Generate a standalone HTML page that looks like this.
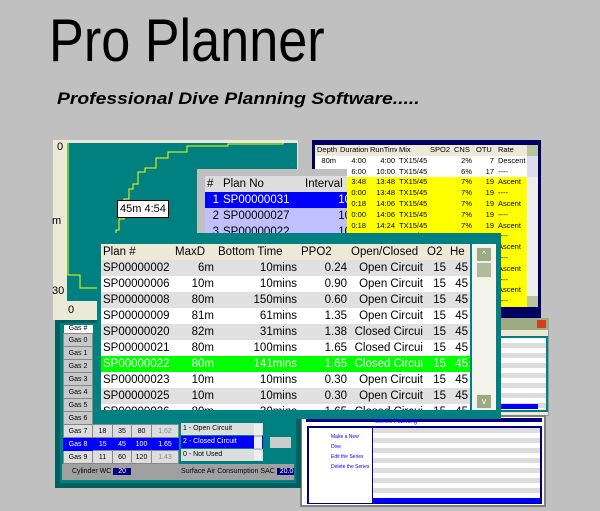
<!DOCTYPE html>
<html><head><meta charset="utf-8"><style>
*{margin:0;padding:0;box-sizing:border-box}
body{width:600px;height:511px;background:#c0c0c0;position:relative;overflow:hidden;font-family:"Liberation Sans",sans-serif}
.a{position:absolute}
table{border-collapse:collapse;table-layout:fixed}
td{white-space:nowrap;overflow:hidden;padding:0 2px}
.r{text-align:right}
.g td{height:13px;line-height:11px}
</style></head><body>
<div class="a" style="left:49px;top:6px;font-size:60px;color:#000;line-height:70px;transform:scaleX(0.87);transform-origin:left;white-space:nowrap">Pro Planner</div>
<div class="a" style="left:57px;top:90px;font-size:16.5px;font-weight:bold;font-style:italic;color:#000;transform:scaleX(1.17);transform-origin:left;white-space:nowrap">Professional Dive Planning Software.....</div>

<!-- chart -->
<div class="a" style="left:53px;top:140px;width:245px;height:180px;background:#ece9d8"></div>
<div class="a" style="left:67px;top:143px;width:230px;height:158px;background:#008080"></div>
<div class="a" style="left:57px;top:141px;font-size:11px">0</div>
<div class="a" style="left:52px;top:285px;font-size:11px">30</div>
<div class="a" style="left:52px;top:215px;font-size:11px">m</div>
<div class="a" style="left:68px;top:304px;font-size:11px">0</div>
<svg class="a" style="left:0;top:0" width="600" height="511"><polyline fill="none" stroke="#ff0" stroke-width="1" points="68,143 68,275 80,275 80,288 112,288 112,290 113,290 113,235 116,235 116,230 119,230 119,219 124,219 124,199 129,199 129,189 133,189 133,184 138,184 138,172 145,172 145,168 156,168 156,158 168,158 168,152 187,152 187,146 228,146 228,144 283,144 283,143"/></svg>
<div class="a" style="left:117px;top:200px;width:52px;height:18px;background:#fff;border:1px solid #000;font-size:11px;line-height:16px;padding-left:2px;white-space:nowrap">45m 4:54</div>

<!-- depth table -->
<div class="a" style="left:312px;top:140px;width:229px;height:180px;background:#000060;padding:5px 3px 3px 3px;overflow:hidden">
<table style="width:223px;font-size:7.5px;line-height:10.8px;background:#ff0">
<col style="width:23px"><col style="width:30px"><col style="width:29px"><col style="width:31px"><col style="width:24px"><col style="width:22px"><col style="width:22px"><col style="width:31px"><col style="width:11px">
<tr style="background:#ece9d8"><td>Depth</td><td>Duration</td><td>RunTime</td><td>Mix</td><td>SPO2</td><td>CNS</td><td>OTU</td><td>Rate</td><td style="background:#b8c4a0"></td></tr>
<tr style="background:#fff"><td class="r">80m</td><td class="r">4:00</td><td class="r">4:00</td><td>TX15/45</td><td></td><td class="r">2%</td><td class="r">7</td><td>Descent</td><td style="background:#dde"></td></tr>
<tr style="background:#fff"><td class="r">80</td><td class="r">6:00</td><td class="r">10:00</td><td>TX15/45</td><td></td><td class="r">6%</td><td class="r">17</td><td>----</td><td style="background:#dde"></td></tr>
<tr><td class="r">48</td><td class="r">3:48</td><td class="r">13:48</td><td>TX15/45</td><td></td><td class="r">7%</td><td class="r">19</td><td>Ascent</td><td style="background:#eee"></td></tr>
<tr><td class="r">48</td><td class="r">0:00</td><td class="r">13:48</td><td>TX15/45</td><td></td><td class="r">7%</td><td class="r">19</td><td>----</td><td style="background:#eee"></td></tr>
<tr><td class="r">18</td><td class="r">0:18</td><td class="r">14:06</td><td>TX15/45</td><td></td><td class="r">7%</td><td class="r">19</td><td>Ascent</td><td style="background:#eee"></td></tr>
<tr><td class="r">18</td><td class="r">0:00</td><td class="r">14:06</td><td>TX15/45</td><td></td><td class="r">7%</td><td class="r">19</td><td>----</td><td style="background:#eee"></td></tr>
<tr><td class="r">8</td><td class="r">0:18</td><td class="r">14:24</td><td>TX15/45</td><td></td><td class="r">7%</td><td class="r">19</td><td>Ascent</td><td style="background:#eee"></td></tr>
<tr><td class="r">8</td><td class="r">0:00</td><td class="r">14:24</td><td>TX15/45</td><td></td><td class="r">7%</td><td class="r">19</td><td>----</td><td style="background:#eee"></td></tr>
<tr><td></td><td></td><td></td><td></td><td></td><td></td><td></td><td>Ascent</td><td style="background:#eee"></td></tr>
<tr><td></td><td></td><td></td><td></td><td></td><td></td><td></td><td>----</td><td style="background:#eee"></td></tr>
<tr><td></td><td></td><td></td><td></td><td></td><td></td><td></td><td>Ascent</td><td style="background:#eee"></td></tr>
<tr><td></td><td></td><td></td><td></td><td></td><td></td><td></td><td>----</td><td style="background:#eee"></td></tr>
<tr><td></td><td></td><td></td><td></td><td></td><td></td><td></td><td>Ascent</td><td style="background:#eee"></td></tr>
<tr><td></td><td></td><td></td><td></td><td></td><td></td><td></td><td>----</td><td style="background:#b8c4a0"></td></tr>
</table></div>

<!-- plan no -->
<div class="a" style="left:197px;top:169px;width:150px;height:72px;background:#c0c0c0;padding:7px 0 0 8px;overflow:hidden">
<table style="width:148px;font-size:11.5px;line-height:16px">
<col style="width:16px"><col style="width:82px"><col style="width:50px">
<tr style="background:#ddd"><td>#</td><td>Plan No</td><td>Interval</td></tr>
<tr style="background:#0000ff;color:#fff"><td class="r">1</td><td>SP00000031</td><td class="r">10</td></tr>
<tr style="background:#c0c0ff"><td class="r">2</td><td>SP00000027</td><td class="r">10</td></tr>
<tr style="background:#c0c0ff"><td class="r">3</td><td>SP00000022</td><td class="r">10</td></tr>
</table></div>

<!-- right small window -->
<div class="a" style="left:492px;top:318px;width:57px;height:98px;background:#ece9d8;border:1px solid #999"></div>
<div class="a" style="left:492px;top:318px;width:57px;height:12px;background:#9cab84"></div>
<div class="a" style="left:537px;top:320px;width:9px;height:8px;background:#d04020"></div>
<div class="a" style="left:496px;top:336px;width:52px;height:76px;background:#008080"></div>
<div class="a" style="left:498px;top:338px;width:48px;height:72px;background:repeating-linear-gradient(#fff 0 5px,#ddd 5px 10px)"></div>
<div class="a" style="left:498px;top:404px;width:40px;height:5px;background:#00f"></div>

<!-- bottom series window -->
<div class="a" style="left:300px;top:415px;width:246px;height:92px;background:#fff;border:2px solid #808080"></div>
<div class="a" style="left:306px;top:418px;width:236px;height:4px;background:#000080"></div>
<div class="a" style="left:375px;top:419px;font-size:6px;color:#00f">Series Planning</div>
<div class="a" style="left:307px;top:426px;width:235px;height:78px;background:#000080"></div>
<div class="a" style="left:309px;top:428px;width:63px;height:75px;background:#fff;font-size:5px;color:#00f;line-height:10px;padding:4px 2px 0 22px">Make a New Dive<br>Edit the Series<br>Delete the Series</div>
<div class="a" style="left:373px;top:428px;width:167px;height:70px;background:repeating-linear-gradient(#ddd 0 5px,#fff 5px 10px)"></div>
<div class="a" style="left:373px;top:498px;width:167px;height:5px;background:#00f"></div>

<!-- gas window -->
<div class="a" style="left:55px;top:320px;width:246px;height:168px;background:#006060"></div>
<div class="a" style="left:60px;top:323px;width:236px;height:160px;background:#008080"></div>
<div class="a" style="left:63px;top:325px;">
<table class="g" style="width:115px;text-align:center;font-size:7px">
<col style="width:29px"><col style="width:20px"><col style="width:19px"><col style="width:20px"><col style="width:27px">
<tr><td style="background:#fff;height:8px;line-height:8px">Gas #</td></tr>
<tr><td style="background:#c8c8c8;border:1px solid #888">Gas 0</td></tr>
<tr><td style="background:#c8c8c8;border:1px solid #888">Gas 1</td></tr>
<tr><td style="background:#c8c8c8;border:1px solid #888">Gas 2</td></tr>
<tr><td style="background:#c8c8c8;border:1px solid #888">Gas 3</td></tr>
<tr><td style="background:#c8c8c8;border:1px solid #888">Gas 4</td></tr>
<tr><td style="background:#c8c8c8;border:1px solid #888">Gas 5</td></tr>
<tr><td style="background:#c8c8c8;border:1px solid #888">Gas 6</td></tr>
<tr style="background:#ddd"><td style="border:1px solid #888">Gas 7</td><td style="border:1px solid #888">18</td><td style="border:1px solid #888">35</td><td style="border:1px solid #888">80</td><td style="border:1px solid #888;color:#888">1.62</td></tr>
<tr style="background:#00f;color:#fff"><td style="border:1px solid #00f">Gas 8</td><td>15</td><td>45</td><td>100</td><td>1.65</td></tr>
<tr style="background:#ddd"><td style="border:1px solid #888">Gas 9</td><td style="border:1px solid #888">11</td><td style="border:1px solid #888">60</td><td style="border:1px solid #888">120</td><td style="border:1px solid #888;color:#888">1.43</td></tr>
</table></div>
<div class="a" style="left:181px;top:423px;width:82px;height:12px;background:#ddd;font-size:7px;line-height:12px;padding-left:2px;white-space:nowrap">1 - Open Circuit</div>
<div class="a" style="left:181px;top:436px;width:82px;height:12px;background:#00f;color:#fff;font-size:7px;line-height:12px;padding-left:2px;white-space:nowrap">2 - Closed Circuit</div>
<div class="a" style="left:181px;top:449px;width:82px;height:12px;background:#ddd;font-size:7px;line-height:12px;padding-left:2px;white-space:nowrap">0 - Not Used</div>
<div class="a" style="left:254px;top:424px;width:8px;height:36px;background:repeating-linear-gradient(#eee 0 11px,#c0c0c0 11px 13px)"></div>
<div class="a" style="left:270px;top:437px;width:21px;height:11px;background:#ccc"></div>
<div class="a" style="left:62px;top:464px;width:232px;height:16px;background:#a0a0a0;font-size:7px;line-height:16px;padding-left:10px;white-space:nowrap;overflow:hidden">Cylinder WC <span style="background:#000080;color:#fff;padding:0 5px">20</span><span style="margin-left:50px">Surface Air Consumption SAC</span> <span style="background:#000080;color:#fff;padding:0 3px">20.0</span> l/min</div>

<!-- main window -->
<div class="a" style="left:97px;top:233px;width:404px;height:186px;background:#008080"></div>
<div class="a" style="left:101px;top:244px;width:369px;height:166px;overflow:hidden;background:#fff">
<table style="width:369px;font-size:11.5px;line-height:16px">
<col style="width:72px"><col style="width:43px"><col style="width:83px"><col style="width:50px"><col style="width:76px"><col style="width:23px"><col style="width:22px">
<tr style="background:#ece9d8"><td>Plan #</td><td>MaxD</td><td>Bottom Time</td><td>PPO2</td><td>Open/Closed</td><td>O2</td><td>He</td></tr>
<tr style="background:#e0e0e0"><td>SP00000002</td><td class="r">6m</td><td class="r">10mins</td><td class="r">0.24</td><td class="r">Open Circuit</td><td class="r">15</td><td class="r">45</td></tr>
<tr><td>SP00000006</td><td class="r">10m</td><td class="r">10mins</td><td class="r">0.90</td><td class="r">Open Circuit</td><td class="r">15</td><td class="r">45</td></tr>
<tr style="background:#e0e0e0"><td>SP00000008</td><td class="r">80m</td><td class="r">150mins</td><td class="r">0.60</td><td class="r">Open Circuit</td><td class="r">15</td><td class="r">45</td></tr>
<tr><td>SP00000009</td><td class="r">81m</td><td class="r">61mins</td><td class="r">1.35</td><td class="r">Open Circuit</td><td class="r">15</td><td class="r">45</td></tr>
<tr style="background:#e0e0e0"><td>SP00000020</td><td class="r">82m</td><td class="r">31mins</td><td class="r">1.38</td><td class="r">Closed Circui</td><td class="r">15</td><td class="r">45</td></tr>
<tr><td>SP00000021</td><td class="r">80m</td><td class="r">100mins</td><td class="r">1.65</td><td class="r">Closed Circui</td><td class="r">15</td><td class="r">45</td></tr>
<tr style="background:#00ff00;color:#fff"><td>SP00000022</td><td class="r">80m</td><td class="r">141mins</td><td class="r">1.65</td><td class="r">Closed Circui</td><td class="r">15</td><td class="r">45</td></tr>
<tr><td>SP00000023</td><td class="r">10m</td><td class="r">10mins</td><td class="r">0.30</td><td class="r">Open Circuit</td><td class="r">15</td><td class="r">45</td></tr>
<tr style="background:#e0e0e0"><td>SP00000025</td><td class="r">10m</td><td class="r">10mins</td><td class="r">0.30</td><td class="r">Open Circuit</td><td class="r">15</td><td class="r">45</td></tr>
<tr><td>SP00000026</td><td class="r">80m</td><td class="r">30mins</td><td class="r">1.65</td><td class="r">Closed Circui</td><td class="r">15</td><td class="r">45</td></tr>
</table></div>
<div class="a" style="left:472px;top:244px;width:24px;height:166px;background:#f4f4ec"></div>
<div class="a" style="left:476px;top:247px;width:16px;height:15px;background:#9cab84;border:1px solid #eee;color:#fff;font-size:9px;text-align:center;line-height:13px">^</div>
<div class="a" style="left:476px;top:262px;width:16px;height:16px;background:#b0bc98;border:1px solid #eee"></div>
<div class="a" style="left:476px;top:394px;width:16px;height:15px;background:#9cab84;border:1px solid #eee;color:#fff;font-size:9px;text-align:center;line-height:13px">v</div>
</body></html>
